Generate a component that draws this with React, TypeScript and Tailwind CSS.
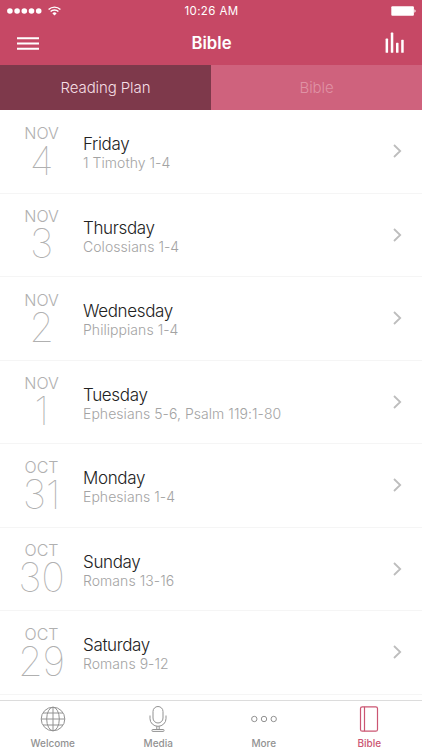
import React from "react";

const readings = [
  { month: "NOV", date: "4", day: "Friday", passage: "1 Timothy 1-4" },
  { month: "NOV", date: "3", day: "Thursday", passage: "Colossians 1-4" },
  { month: "NOV", date: "2", day: "Wednesday", passage: "Philippians 1-4" },
  { month: "NOV", date: "1", day: "Tuesday", passage: "Ephesians 5-6, Psalm 119:1-80" },
  { month: "OCT", date: "31", day: "Monday", passage: "Ephesians 1-4" },
  { month: "OCT", date: "30", day: "Sunday", passage: "Romans 13-16" },
  { month: "OCT", date: "29", day: "Saturday", passage: "Romans 9-12" },
];

const GlobeIcon = () => (
  <svg width="26" height="26" viewBox="0 0 26 26" fill="none" stroke="currentColor" strokeWidth="1">
    <circle cx="13" cy="13" r="11.8" />
    <ellipse cx="13" cy="13" rx="6.3" ry="11.8" />
    <path d="M13 1.2v23.6M1.2 13h23.6M3 7h20M3 19h20" />
  </svg>
);

const MicIcon = () => (
  <svg width="26" height="26" viewBox="0 0 26 26" fill="none" stroke="currentColor" strokeWidth="1">
    <rect x="8" y="0.5" width="10" height="16.5" rx="5" />
    <path d="M5 9.5v3.2a8 7.6 0 0 0 16 0V9.5M11.8 20.2v3.4M14.2 20.2v3.4" />
    <rect x="7" y="23.5" width="12" height="1.9" rx="0.6" />
  </svg>
);

const MoreIcon = () => (
  <svg width="26" height="26" viewBox="0 0 26 26" fill="none" stroke="currentColor" strokeWidth="1">
    <circle cx="3.3" cy="13" r="2.7" />
    <circle cx="13" cy="13" r="2.7" />
    <circle cx="22.7" cy="13" r="2.7" />
  </svg>
);

const BookIcon = () => (
  <svg width="26" height="26" viewBox="0 0 26 26" fill="none" stroke="currentColor" strokeWidth="1.2">
    <rect x="4.5" y="0.8" width="17" height="24.4" rx="1.8" />
    <path d="M8.5 0.8v24.4" />
  </svg>
);

const navItems = [
  { label: "Welcome", icon: GlobeIcon },
  { label: "Media", icon: MicIcon },
  { label: "More", icon: MoreIcon },
  { label: "Bible", icon: BookIcon, active: true },
];

const StatusBar = () => (
  <div className="grid h-[22px] grid-cols-3 items-center pl-[7px] pr-[6px]">
    <div className="flex items-center gap-[6px]">
      <svg width="35" height="6" viewBox="0 0 35 6" fill="currentColor">
        <circle cx="2.9" cy="3" r="2.8" />
        <circle cx="10.1" cy="3" r="2.8" />
        <circle cx="17.3" cy="3" r="2.8" />
        <circle cx="24.5" cy="3" r="2.8" />
        <circle cx="31.7" cy="3" r="2.8" />
      </svg>
      <svg width="13" height="10" viewBox="0 0 13 10" fill="none" stroke="currentColor" strokeWidth="1.4">
        <path d="M0.6 3.5a8.4 8.4 0 0 1 11.8 0M2.6 5.6a5.5 5.5 0 0 1 7.8 0" />
        <path d="M6.5 9.6L4.4 7.4a3 3 0 0 1 4.2 0z" fill="currentColor" stroke="none" />
      </svg>
    </div>
    <span className="pt-[2px] text-center text-[11.5px] tracking-[0.4px]">10:26 AM</span>
    <svg className="justify-self-end" width="25" height="10" viewBox="0 0 25 10" fill="currentColor">
      <rect x="0.3" y="0.2" width="22.6" height="9.6" rx="1" />
      <path d="M23.4 3.3c1.6 0.5 1.6 2.9 0 3.4z" />
    </svg>
  </div>
);

const App = () => {
  return (
    <div className="flex h-[750px] w-[422px] flex-col overflow-hidden bg-white font-['Inter','Liberation_Sans',sans-serif] antialiased">
      {/* Header */}
      <header className="h-[65px] shrink-0 bg-[#c64865] text-white">
        <StatusBar />
        <div className="flex h-[42px] items-center justify-between px-[17px]">
          <svg width="22" height="13" viewBox="0 0 22 13" fill="currentColor">
            <path d="M0 0.2h22v2H0zM0 5.5h22v2H0zM0 10.8h22v2H0z" />
          </svg>
          <h1 className="pt-[2px] text-[16.7px] font-semibold">Bible</h1>
          <svg width="21" height="22" viewBox="0 0 21 22" fill="currentColor">
            <rect x="1.6" y="6.6" width="2.5" height="14.2" rx="0.6" />
            <rect x="6.8" y="0.6" width="2.5" height="20.2" rx="0.6" />
            <rect x="12" y="10.8" width="2.5" height="10" rx="0.6" />
            <rect x="17.2" y="7.8" width="2.5" height="13" rx="0.6" />
          </svg>
        </div>
      </header>

      {/* Tabs */}
      <div className="grid h-[45px] shrink-0 grid-cols-2 text-[15px] font-light tracking-[-0.1px]">
        <button className="bg-[#7e394b] pt-[2px] text-[#f6dfe5]">Reading Plan</button>
        <button className="bg-[#cf627d] pt-[2px] text-[#e092a5]">Bible</button>
      </div>

      {/* Reading list */}
      <ul className="h-[590px] shrink-0">
        {readings.map((item) => (
          <li
            key={item.month + item.date}
            className="flex h-[83.5px] items-center border-b border-[#f5f5f5] pr-[20px]"
          >
            <div className="flex w-[83px] flex-col items-center text-[#b0b0b0]">
              <span className="text-[16px] font-light leading-[18px]">{item.month}</span>
              <span className="text-[40px] font-thin leading-[37px] tracking-[-0.3px]">{item.date}</span>
            </div>
            <div className="flex flex-1 flex-col pt-[4px]">
              <span className="text-[17px] font-light leading-[20px] tracking-[-0.35px] text-[#222]">{item.day}</span>
              <span className="text-[14px] font-light leading-[18px] tracking-[0.05px] text-[#a3a3a3]">
                {item.passage}
              </span>
            </div>
            <svg width="9" height="14" viewBox="0 0 9 14" fill="none" stroke="#bdbdbd" strokeWidth="1.8">
              <path d="M1 1l6.2 6L1 13" />
            </svg>
          </li>
        ))}
      </ul>

      {/* Bottom navigation */}
      <nav className="grid h-[51px] shrink-0 grid-cols-4 border-t border-[#dcdcdc]">
        {navItems.map(({ label, icon: Icon, active }) => (
          <button
            key={label}
            className={`flex flex-col items-center pt-[5px] ${active ? "text-[#cb5572]" : "text-[#929292]"}`}
          >
            <Icon />
            <span className="mt-[5px] text-[10px] font-medium leading-[13px]">{label}</span>
          </button>
        ))}
      </nav>
    </div>
  );
};

export default App;
